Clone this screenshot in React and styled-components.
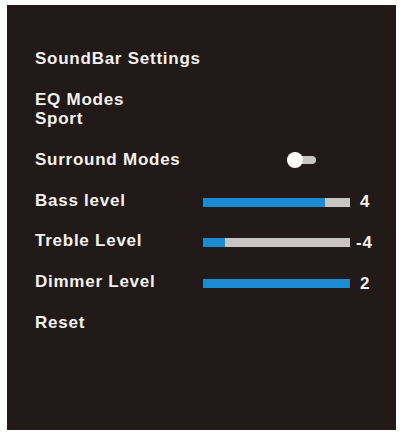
import React from "react";
import styled, { createGlobalStyle } from "styled-components";

const Global = createGlobalStyle`
  html, body { margin: 0; padding: 0; background: #ffffff; }
  body { font-family: "Liberation Sans", Arial, sans-serif; }
`;

const Panel = styled.div`
  box-sizing: border-box;
  margin: 5px 0 0 7px;
  width: 389px;
  height: 425px;
  background: #211a18;
  padding: 34px 0 0 28px;
  display: flex;
  flex-direction: column;
  color: #f3f1ee;
  font-weight: 700;
  font-size: 17px;
  line-height: 20px;
  letter-spacing: 0.75px;
`;

const Title = styled.div`
  height: 40px;
  display: flex;
  align-items: center;
`;

const Stack = styled.div`
  margin: 11px 0 12px;
  line-height: 19px;
  display: flex;
  flex-direction: column;
`;

const Row = styled.div`
  height: 40.6px;
  display: grid;
  grid-template-columns: 168px 147px auto;
  align-items: center;
`;

const Label = styled.span``;

const Track = styled.div`
  height: 9px;
  margin-top: 3px;
  background: #c9c5c4;
  display: flex;
`;

const Fill = styled.div`
  height: 100%;
  background: #1b8bd2;
`;

const Value = styled.span`
  margin-left: ${(p) => (p.$negative ? 6 : 10)}px;
  margin-top: 3px;
`;

const Toggle = styled.span`
  position: relative;
  display: block;
  margin-left: 84px;
  width: 30px;
  height: 16px;
  &::before {
    content: "";
    position: absolute;
    left: 8px;
    top: 4px;
    width: 21px;
    height: 8px;
    border-radius: 0 4px 4px 0;
    background: #c9c5c4;
  }
`;

const Knob = styled.span`
  position: absolute;
  left: 0;
  top: 0;
  width: 16px;
  height: 16px;
  border-radius: 50%;
  background: #ffffff;
`;

const levels = [
  { label: "Bass level", value: 4, pct: 83 },
  { label: "Treble Level", value: -4, pct: 15 },
  { label: "Dimmer Level", value: 2, pct: 100 },
];

export default function App() {
  return (
    <>
      <Global />
      <Panel>
        <Title>SoundBar Settings</Title>
        <Stack>
          <span>EQ Modes</span>
          <span>Sport</span>
        </Stack>
        <Row>
          <Label>Surround Modes</Label>
          <Toggle>
            <Knob />
          </Toggle>
        </Row>
        {levels.map((l) => (
          <Row key={l.label}>
            <Label>{l.label}</Label>
            <Track>
              <Fill style={{ width: `${l.pct}%` }} />
            </Track>
            <Value $negative={l.value < 0}>{l.value}</Value>
          </Row>
        ))}
        <Row>
          <Label>Reset</Label>
        </Row>
      </Panel>
    </>
  );
}
